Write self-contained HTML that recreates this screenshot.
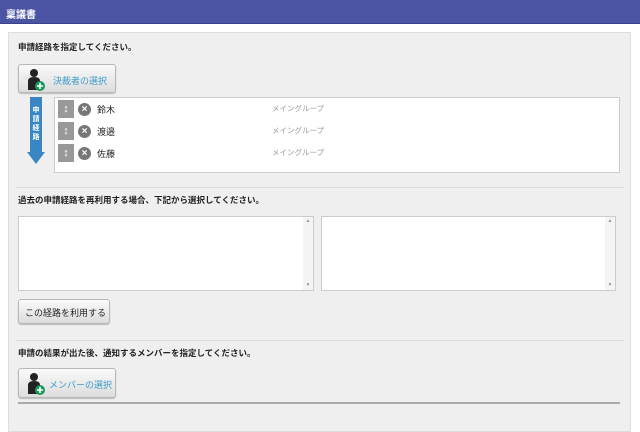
<!DOCTYPE html>
<html><head><meta charset="utf-8"><style>
*{margin:0;padding:0;box-sizing:border-box}
body{width:640px;height:426px;background:#fff;font-family:"Liberation Sans","Noto Sans CJK JP",sans-serif;font-size:9px;color:#222;position:relative;overflow:hidden}
div,span{white-space:nowrap}
.hd{position:absolute;left:0;top:0;width:640px;height:24px;background:#4b54a3;border-bottom:1px solid #3a4290;color:#fff;font-weight:bold;font-size:10px;padding:6px 0 0 6px}
.pn{position:absolute;left:8px;top:32px;width:623px;height:400px;background:#efefef;border:1px solid #ddd}
.a{position:absolute}
.t{font-weight:bold;font-size:8.5px}
.btn{position:absolute;background:linear-gradient(#fafafa,#dcdcdc);border:1px solid #b8b8b8;border-radius:3px;box-shadow:0 1px 1px #bbb}
.box{position:absolute;background:#fff;border:1px solid #ccc}
.sep{position:absolute;height:1px;background:#ddd}
.row{position:absolute;left:58px;height:18px;width:300px}
.sq{position:absolute;left:0;top:0;width:16px;height:18px;background:#999;color:#fff;font-size:11px;text-align:center;line-height:18px;font-weight:bold}
.x{position:absolute;left:20px;top:3px;width:13px;height:13px;border-radius:50%;background:#777;color:#fff;font-size:10px;line-height:13px;text-align:center;font-weight:bold}
.nm{position:absolute;left:39px;top:3px;font-size:9px}
.gp{position:absolute;left:214px;top:3px;font-size:7.5px;color:#999}
.lbl{position:absolute;font-size:9px;color:#3a9ac8}
</style></head><body>
<div class="hd">稟議書</div>
<div class="pn"></div>
<div class="a t" style="left:18px;top:41px">申請経路を指定してください。</div>
<div class="btn" style="left:18px;top:64px;width:98px;height:29px">
<svg class="a" style="left:8px;top:3px" width="18" height="24"><circle cx="7" cy="5" r="4" fill="#222"/><path d="M1 22 V13 Q1 9 7 9 Q13 9 13 13 V22Z" fill="#222"/><circle cx="13" cy="18" r="5" fill="#1a9a5a"/><path d="M13 15v6M10 18h6" stroke="#fff" stroke-width="1.6"/></svg>
<span class="lbl" style="left:34px;top:9px">決裁者の選択</span></div>
<svg class="a" style="left:27px;top:97px" width="18" height="70"><rect x="3" y="0" width="12" height="56" fill="#3a86c4"/><path d="M0 55 H18 L9 67Z" fill="#3a86c4"/></svg>
<div class="a" style="left:31px;top:106px;width:10px;font-size:7px;color:#fff;line-height:9px;font-weight:bold;white-space:normal;text-align:center">申<br>請<br>経<br>路</div>
<div class="box" style="left:54px;top:97px;width:566px;height:76px"></div>
<div class="row" style="top:100px"><div class="sq">↕</div><div class="x">×</div><div class="nm">鈴木</div><div class="gp">メイングループ</div></div>
<div class="row" style="top:122px"><div class="sq">↕</div><div class="x">×</div><div class="nm">渡邉</div><div class="gp">メイングループ</div></div>
<div class="row" style="top:144px"><div class="sq">↕</div><div class="x">×</div><div class="nm">佐藤</div><div class="gp">メイングループ</div></div>
<div class="sep" style="left:16px;top:187px;width:608px"></div>
<div class="a t" style="left:18px;top:194px">過去の申請経路を再利用する場合、下記から選択してください。</div>
<div class="box" style="left:18px;top:216px;width:296px;height:75px"><div class="a" style="right:0;top:0;width:10px;height:73px;background:#f4f4f4;font-size:5px;color:#999;text-align:center;white-space:normal;line-height:8px">▲<br><br><br><br><br><br><br><br>▼</div></div>
<div class="box" style="left:321px;top:216px;width:295px;height:75px"><div class="a" style="right:0;top:0;width:10px;height:73px;background:#f4f4f4;font-size:5px;color:#999;text-align:center;white-space:normal;line-height:8px">▲<br><br><br><br><br><br><br><br>▼</div></div>
<div class="btn" style="left:18px;top:299px;width:92px;height:25px;font-size:9px;padding:6px 0 0 6px">この経路を利用する</div>
<div class="sep" style="left:16px;top:340px;width:608px"></div>
<div class="a t" style="left:18px;top:347px">申請の結果が出た後、通知するメンバーを指定してください。</div>
<div class="btn" style="left:18px;top:368px;width:98px;height:30px">
<svg class="a" style="left:8px;top:3px" width="18" height="24"><circle cx="7" cy="5" r="4" fill="#222"/><path d="M1 22 V13 Q1 9 7 9 Q13 9 13 13 V22Z" fill="#222"/><circle cx="13" cy="18" r="5" fill="#1a9a5a"/><path d="M13 15v6M10 18h6" stroke="#fff" stroke-width="1.6"/></svg>
<span class="lbl" style="left:30px;top:9px">メンバーの選択</span></div>
<div class="a" style="left:18px;top:402px;width:602px;height:2px;background:#aaa"></div>
</body></html>
